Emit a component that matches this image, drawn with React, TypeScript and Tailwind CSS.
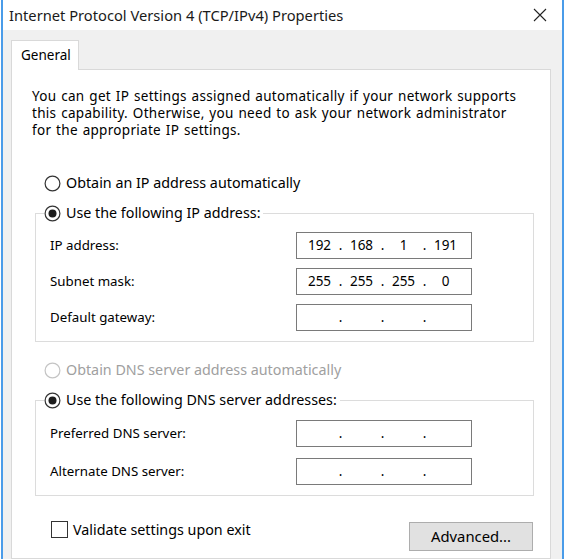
const font = { fontFamily: '"Noto Sans", "Open Sans", sans-serif' };

function Radio({ checked, disabled }: { checked?: boolean; disabled?: boolean }) {
  const stroke = disabled ? "#c4c4c4" : "#333333";
  return (
    <svg width="17" height="17" viewBox="0 0 17 17" className="shrink-0">
      <circle cx="8.5" cy="8.5" r="7.4" fill="white" stroke={stroke} strokeWidth="1.2" />
      {checked && <circle cx="8.5" cy="8.5" r="4" fill="#1c1c1c" />}
    </svg>
  );
}

function IpField({ parts }: { parts: string[] }) {
  return (
    <div className="w-[176px] h-[27px] border border-[#7a7a7a] bg-white flex items-center pl-[4px] text-[13.5px] text-black">
      {parts.map((p, i) => (
        <div key={i} className="flex items-center">
          <span className="w-[37px] text-center">{p}</span>
          {i < 3 && <span className="w-[5px] text-center">.</span>}
        </div>
      ))}
    </div>
  );
}

function Row({ label, parts }: { label: string; parts: string[] }) {
  return (
    <div className="flex items-center">
      <span className="w-[246px] text-[13.3px] text-black">{label}</span>
      <IpField parts={parts} />
    </div>
  );
}

const empty = ["", "", "", ""];

export default function App() {
  return (
    <div className="w-[565px] h-[559px] bg-white px-[1px] overflow-hidden" style={font}>
      <div className="h-full border-x-2 border-[#4a9ce9] flex flex-col">
        <div className="h-[30px] shrink-0 bg-white flex items-center justify-between pl-[6px] pr-[15px]">
          <span className="text-[14.7px] text-[#1a1a1a]">Internet Protocol Version 4 (TCP/IPv4) Properties</span>
          <svg width="14" height="14" viewBox="0 0 14 14">
            <path d="M1 1 L13 13 M13 1 L1 13" stroke="#222" strokeWidth="1.1" />
          </svg>
        </div>

        <div className="flex-1 bg-[#f0f0f0] pt-[10px] pl-[8px] pr-[11px] flex flex-col">
          <div className="w-[68px] h-[30px] bg-white border border-b-0 border-[#d9d9d9] -mb-[1px] relative z-10 flex items-center pl-[9px] text-[13.5px] text-black">
            General
          </div>

          <div className="flex-1 bg-white border border-[#d9d9d9] pt-[18px]">
            <p className="pl-[20px] text-[13.5px] tracking-[0.3px] [word-spacing:1px] leading-[17px] text-black whitespace-nowrap">
              You can get IP settings assigned automatically if your network supports
              <br />
              this capability. Otherwise, you need to ask your network administrator
              <br />
              for the appropriate IP settings.
            </p>

            <div className="mt-[36px] ml-[32px] flex items-center gap-[5px] text-[14.3px] text-black h-[16px]">
              <Radio />
              <span>Obtain an IP address automatically</span>
            </div>

            <fieldset className="mt-[14px] ml-[23px] mr-[16px] border border-[#dcdcdc] pb-[10px]">
              <legend className="ml-[8px] pr-[3px] flex items-center gap-[5px] text-[14.3px] text-black h-[16px]">
                <Radio checked />
                <span>Use the following IP address:</span>
              </legend>
              <div className="pl-[14px] pt-[11px] flex flex-col gap-[9px]">
                <Row label="IP address:" parts={["192", "168", "1", "191"]} />
                <Row label="Subnet mask:" parts={["255", "255", "255", "0"]} />
                <Row label="Default gateway:" parts={empty} />
              </div>
            </fieldset>

            <div className="mt-[20px] ml-[32px] flex items-center gap-[5px] text-[14.3px] text-[#a0a0a0] h-[16px]">
              <Radio disabled />
              <span>Obtain DNS server address automatically</span>
            </div>

            <fieldset className="mt-[14px] ml-[23px] mr-[16px] border border-[#dcdcdc] pb-[10px]">
              <legend className="ml-[8px] pr-[3px] flex items-center gap-[5px] text-[14.3px] text-black h-[16px]">
                <Radio checked />
                <span>Use the following DNS server addresses:</span>
              </legend>
              <div className="pl-[14px] pt-[12px] flex flex-col gap-[11px]">
                <Row label="Preferred DNS server:" parts={empty} />
                <Row label="Alternate DNS server:" parts={empty} />
              </div>
            </fieldset>

            <div className="mt-[23px] ml-[39px] mr-[17px] flex items-start justify-between">
              <div className="flex items-center gap-[5px] text-[14.3px] text-black">
                <div className="w-[17px] h-[17px] border border-[#333333] bg-white" />
                <span>Validate settings upon exit</span>
              </div>
              <button className="mt-[3px] w-[124px] h-[29px] bg-[#e1e1e1] border border-[#adadad] text-[14.8px] text-black">
                Advanced...
              </button>
            </div>
          </div>
        </div>
      </div>
    </div>
  );
}
